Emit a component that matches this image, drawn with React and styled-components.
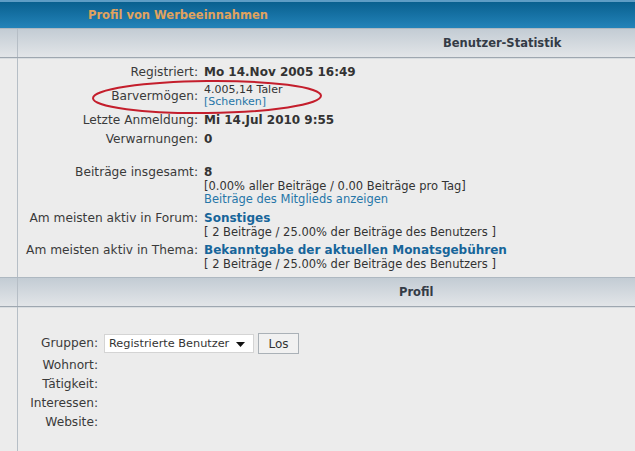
import React from "react";
import styled, { createGlobalStyle } from "styled-components";

const GlobalStyle = createGlobalStyle`
  html, body {
    margin: 0;
    padding: 0;
    background: #ececec;
  }
  body {
    font-family: "DejaVu Sans", Verdana, sans-serif;
    color: #333;
  }
`;

const Page = styled.div`
  position: relative;
  display: flex;
  flex-direction: column;
  width: 635px;
  height: 451px;
  overflow: hidden;
  background: #ececec;
`;

const TitleBar = styled.div`
  height: 26px;
  border-top: 2px solid #5e9dc5;
  background: linear-gradient(to bottom, #09608f, #2383b9);
  display: flex;
  align-items: center;
  padding-left: 88px;
  color: #e0a35e;
  font-weight: bold;
  font-size: 11.5px;
`;

const Band = styled.div`
  display: flex;
  flex: ${(p) => (p.$grow ? 1 : "none")};
`;

const Side = styled.div`
  width: 17px;
  flex: none;
  border-right: 1px solid #b6bec6;
`;

const HeadBand = styled(Band)`
  height: 28px;
  border-top: 1px solid #aeb8c1;
  border-bottom: 1px solid #9ea7b0;
  box-shadow: 0 1px 0 #d9dde0;
  background: linear-gradient(to bottom, #c3ccd4, #e2e5e8);
`;

const HeadTitle = styled.div`
  flex: 1;
  display: flex;
  align-items: center;
  padding-left: ${(p) => p.$indent}px;
  font-size: 11.5px;
  font-weight: bold;
  color: #343b46;
`;

const Body = styled.div`
  flex: 1;
  display: flex;
  flex-direction: column;
  row-gap: ${(p) => p.$gap}px;
  padding: ${(p) => p.$pad};
`;

const Row = styled.div`
  display: grid;
  grid-template-columns: ${(p) => p.$labelWidth}px 1fr;
  column-gap: 6px;
  align-items: ${(p) => (p.$middle ? "center" : "start")};
  min-height: ${(p) => p.$height || 0}px;
`;

const Label = styled.div`
  text-align: right;
  font-size: 12.2px;
  line-height: 15px;
  color: #3a3a3a;
  white-space: nowrap;
`;

const Value = styled.div`
  font-size: 12px;
  line-height: 15px;
  font-weight: bold;
  color: ${(p) => (p.$link ? "#17659a" : "#333")};
  white-space: nowrap;
`;

const Small = styled.div`
  font-size: ${(p) => (p.$tiny ? 11 : 11.5)}px;
  line-height: ${(p) => (p.$tiny ? 12 : 13)}px;
  font-weight: normal;
  color: ${(p) => (p.$link ? "#2676a8" : "#333")};
  white-space: nowrap;
`;

const Controls = styled.div`
  display: flex;
  align-items: center;
  gap: 4px;
`;

const SelectBox = styled.div`
  width: 143px;
  height: 17px;
  padding-left: 4px;
  padding-right: 1px;
  border: 1px solid #d4d4d4;
  background: #fff;
  display: flex;
  align-items: center;
  justify-content: space-between;
  font-size: 11.3px;
  color: #333;
  white-space: nowrap;
  overflow: hidden;
`;

const Arrow = styled.svg`
  flex: none;
  width: 9px;
  height: 5px;
  margin-right: 7px;
  margin-top: 2px;
`;

const Button = styled.button`
  width: 41px;
  height: 21px;
  padding: 0;
  border: 1px solid #aab1b7;
  background: #f1f1f1;
  font-family: "DejaVu Sans", Verdana, sans-serif;
  font-size: 12px;
  color: #333;
`;

const Circle = styled.svg`
  position: absolute;
  left: 90px;
  top: 78px;
  width: 234px;
  height: 38px;
  pointer-events: none;
`;

const App = () => {
  return (
    <Page>
      <GlobalStyle />
      <TitleBar>Profil von Werbeeinnahmen</TitleBar>

      <HeadBand>
        <Side />
        <HeadTitle $indent={425}>Benutzer-Statistik</HeadTitle>
      </HeadBand>
      <Band>
        <Side />
        <Body $pad="7px 0 6px" $gap={4.3}>
          <Row $labelWidth={180}>
            <Label>Registriert:</Label>
            <Value>Mo 14.Nov 2005 16:49</Value>
          </Row>
          <Row $labelWidth={180} $middle>
            <Label>Barvermögen:</Label>
            <div>
              <Small $tiny>4.005,14 Taler</Small>
              <Small $tiny $link>[Schenken]</Small>
            </div>
          </Row>
          <Row $labelWidth={180}>
            <Label>Letzte Anmeldung:</Label>
            <Value>Mi 14.Jul 2010 9:55</Value>
          </Row>
          <Row $labelWidth={180}>
            <Label>Verwarnungen:</Label>
            <Value>0</Value>
          </Row>
          <Row $labelWidth={180} $height={10} />
          <Row $labelWidth={180}>
            <Label>Beiträge insgesamt:</Label>
            <div>
              <Value>8</Value>
              <Small>[0.00% aller Beiträge / 0.00 Beiträge pro Tag]</Small>
              <Small $link>Beiträge des Mitglieds anzeigen</Small>
            </div>
          </Row>
          <Row $labelWidth={180}>
            <Label>Am meisten aktiv in Forum:</Label>
            <div>
              <Value $link>Sonstiges</Value>
              <Small>[ 2 Beiträge / 25.00% der Beiträge des Benutzers ]</Small>
            </div>
          </Row>
          <Row $labelWidth={180}>
            <Label>Am meisten aktiv in Thema:</Label>
            <div>
              <Value $link>Bekanntgabe der aktuellen Monatsgebühren</Value>
              <Small>[ 2 Beiträge / 25.00% der Beiträge des Benutzers ]</Small>
            </div>
          </Row>
        </Body>
      </Band>

      <HeadBand>
        <Side />
        <HeadTitle $indent={381}>Profil</HeadTitle>
      </HeadBand>
      <Band $grow>
        <Side />
        <Body $pad="26px 0 0" $gap={4}>
          <Row $labelWidth={80} $middle>
            <Label>Gruppen:</Label>
            <Controls>
              <SelectBox>
                Registrierte Benutzer
                <Arrow viewBox="0 0 9 5">
                  <path d="M0 0h9L4.5 5z" fill="#111" />
                </Arrow>
              </SelectBox>
              <Button>Los</Button>
            </Controls>
          </Row>
          <Row $labelWidth={80}>
            <Label>Wohnort:</Label>
          </Row>
          <Row $labelWidth={80}>
            <Label>Tätigkeit:</Label>
          </Row>
          <Row $labelWidth={80}>
            <Label>Interessen:</Label>
          </Row>
          <Row $labelWidth={80}>
            <Label>Website:</Label>
          </Row>
        </Body>
      </Band>

      <Circle viewBox="0 0 234 38">
        <ellipse
          cx="117"
          cy="19"
          rx="114"
          ry="16"
          fill="none"
          stroke="#c41e2c"
          strokeWidth="2"
          transform="rotate(-0.6 117 19)"
        />
      </Circle>
    </Page>
  );
};

export default App;
